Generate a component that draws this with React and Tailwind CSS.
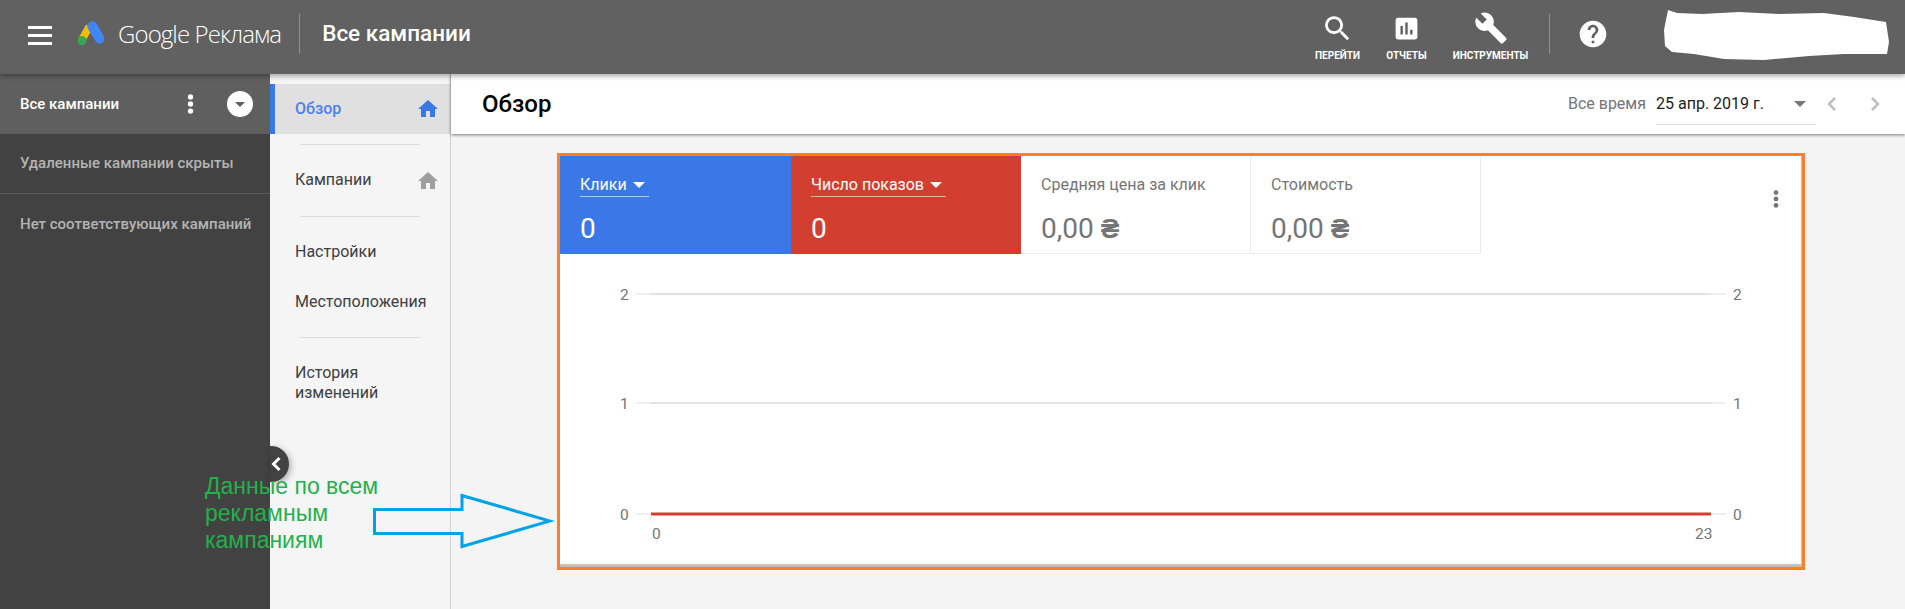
import React from 'react'

const paths = {
  home: 'M10 20v-6h4v6h5v-8h3L12 3 2 12h3v8z',
  search: 'M15.5 14h-.79l-.28-.27C15.41 12.59 16 11.11 16 9.5 16 5.91 13.09 3 9.5 3S3 5.91 3 9.5 5.91 16 9.5 16c1.61 0 3.09-.59 4.23-1.57l.27.28v.79l5 4.99L20.49 19l-4.99-5zm-6 0C7.01 14 5 11.99 5 9.5S7.01 5 9.5 5 14 7.01 14 9.5 11.99 14 9.5 14z',
  report: 'M19 3H5c-1.1 0-2 .9-2 2v14c0 1.1.9 2 2 2h14c1.1 0 2-.9 2-2V5c0-1.1-.9-2-2-2zM9 17H7v-7h2v7zm4 0h-2V7h2v10zm4 0h-2v-4h2v4z',
  wrench: 'M22.7 19l-9.1-9.1c.9-2.3.4-5-1.5-6.9-2-2-5-2.4-7.4-1.3L9 6 6 9 1.6 4.7C.4 7.1.9 10.1 2.9 12.1c1.9 1.9 4.6 2.4 6.9 1.5l9.1 9.1c.4.4 1 .4 1.4 0l2.3-2.3c.5-.4.5-1.1.1-1.4z',
  help: 'M12 2C6.48 2 2 6.48 2 12s4.48 10 10 10 10-4.48 10-10S17.52 2 12 2zm1 17h-2v-2h2v2zm2.07-7.75l-.9.92C13.45 12.9 13 13.5 13 15h-2v-.5c0-1.1.45-2.1 1.17-2.83l1.24-1.26c.37-.36.59-.86.59-1.41 0-1.1-.9-2-2-2s-2 .9-2 2H8c0-2.21 1.79-4 4-4s4 1.79 4 4c0 .88-.36 1.68-.93 2.25z',
}

function Icon({ name, className }) {
  return (
    <svg viewBox="0 0 24 24" fill="currentColor" className={className}>
      <path d={paths[name]} />
    </svg>
  )
}

function Dots({ className }) {
  return (
    <svg viewBox="0 0 6 18" fill="currentColor" className={className}>
      <circle cx="3" cy="2.6" r="2.4" />
      <circle cx="3" cy="9" r="2.4" />
      <circle cx="3" cy="15.4" r="2.4" />
    </svg>
  )
}

function Caret({ className }) {
  return (
    <svg viewBox="0 0 12 6" fill="currentColor" className={className}>
      <path d="M0 0h12L6 6z" />
    </svg>
  )
}

function Logo() {
  return (
    <svg viewBox="0 0 28 26" className="w-[28px] h-[26px]">
      <path d="M9.2 4.5 1.4 18.2l6.6 3.6 7.4-13z" fill="#fbbc04" />
      <path d="M13.8 1.5c2.6-1 4.7.2 5.7 1.8l7.2 13c1.3 2.6.5 5.2-1.6 6.6-2.3 1.300-5 .6-6.300-1.500L11 9c-1.500-3 0-6.400 2.800-7.500z" fill="#4285f4" />
      <circle cx="5" cy="20.500" r="4.500" fill="#34a853" />
    </svg>
  )
}

function HeaderAction({ icon, label, width, iconClass }) {
  return (
    <div className={`flex flex-col items-center text-white ${width}`}>
      <div className="h-[38px] flex items-center justify-center">
        <Icon name={icon} className={iconClass} />
      </div>
      <span className="mt-[2px] text-[10px] leading-[14px] font-bold whitespace-nowrap">{label}</span>
    </div>
  )
}

function Header() {
  return (
    <header className="relative z-20 h-[74px] shrink-0 flex items-start bg-[#616161] shadow-[0_2px_5px_rgba(0,0,0,0.35)]">
      <div className="w-[28px] ml-[28px] mt-[26px] flex flex-col gap-[5px]">
        <div className="h-[3px] w-[24px] bg-white"></div>
        <div className="h-[3px] w-[24px] bg-white"></div>
        <div className="h-[3px] w-[24px] bg-white"></div>
      </div>
      <div className="ml-[21px] mt-[20px]">
        <Logo />
      </div>
      <div className="ml-[13px] mt-[18px] text-[24px] leading-[32px] text-white font-['Open_Sans',sans-serif] tracking-[-0.9px] font-light whitespace-nowrap">Google Реклама</div>
      <div className="ml-[18px] mt-[14px] h-[40px] w-px bg-[#8e8e8e]"></div>
      <div className="ml-[22px] mt-[19px] text-[22.500px] leading-[28px] font-medium text-white whitespace-nowrap">Все кампании</div>

      <div className="ml-auto mr-[16px] flex items-start">
        <div className="flex items-start mt-[9px]">
          <HeaderAction icon="search" label="ПЕРЕЙТИ" width="w-[69px]" iconClass="w-[33px] h-[33px]" />
          <HeaderAction icon="report" label="ОТЧЕТЫ" width="w-[69px]" iconClass="w-[29px] h-[29px]" />
          <HeaderAction icon="wrench" label="ИНСТРУМЕНТЫ" width="w-[99px]" iconClass="w-[34px] h-[34px]" />
        </div>
        <div className="ml-[9px] mt-[14px] h-[40px] w-px bg-[#8e8e8e]"></div>
        <Icon name="help" className="ml-[27px] mt-[18px] w-[32px] h-[32px] text-white" />
        <svg viewBox="0 0 225 50" className="ml-[55px] mt-[10px] w-[225px] h-[50px]" fill="#fff">
          <path d="M4 0 13 3 38 4 75 2 115 4 160 3 190 7 222 12 225 32 223 44 180 44 145 46 100 50 60 49 30 44 8 42 1 36 0 20z" />
        </svg>
      </div>
    </header>
  )
}

function Sidebar() {
  return (
    <aside className="w-[270px] shrink-0 bg-[#424242] text-[15px] font-medium">
      <div className="h-[60px] bg-[#5f5f5f] flex items-center pl-[20px] text-white">
        <span className="leading-[20px]">Все кампании</span>
        <Dots className="ml-[68px] w-[7px] h-[20px]" />
        <div className="ml-[33px] w-[26px] h-[26px] rounded-full bg-white flex items-center justify-center">
          <Caret className="w-[10px] h-[5px] text-[#5f5f5f]" />
        </div>
      </div>
      <div className="h-[60px] flex items-center pl-[20px] text-[#b4b4b4] border-b border-[#5a5a5a]">Удаленные кампании скрыты</div>
      <div className="h-[60px] flex items-center pl-[20px] text-[#b4b4b4]">Нет соответствующих кампаний</div>
    </aside>
  )
}

function Divider({ className }) {
  return <div className={`ml-[30px] w-[120px] h-px bg-[#dcdcdc] ${className}`}></div>
}

function Nav() {
  return (
    <nav className="w-[181px] shrink-0 bg-[#f5f5f5] border-r border-[#d2d2d2] pt-[10px] text-[16px] text-[#3c4043]">
      <div className="h-[50px] bg-[#e0e0e0] border-l-[5px] border-[#3b78e7] flex items-center pl-[20px] pr-[10px] justify-between text-[#4d80ee] font-medium">
        <span>Обзор</span>
        <Icon name="home" className="w-[24px] h-[24px] text-[#3b78e7]" />
      </div>
      <Divider className="mt-[10px]" />
      <div className="h-[71px] flex items-center pl-[25px] pr-[10px] justify-between">
        <span className="-mt-[2px]">Кампании</span>
        <Icon name="home" className="w-[24px] h-[24px] text-[#9e9e9e]" />
      </div>
      <Divider />
      <div className="h-[70px] flex items-center pl-[25px]">Настройки</div>
      <div className="-mt-[20px] h-[70px] flex items-center pl-[25px]">Местоположения</div>
      <Divider />
      <div className="mt-[25px] pl-[25px] leading-[20px]">История<br />изменений</div>
    </nav>
  )
}

function Metric({ title, value, unit, bg, width, active }) {
  return (
    <div className={`${width} h-[98px] shrink-0 pl-[20px] pt-[17px] ${bg} ${active ? 'text-white' : 'text-[#757575] border-r border-b border-[#ececec]'}`}>
      <div className={`inline-flex items-center h-[23px] text-[16px] leading-[20px] ${active ? 'border-b border-white/60 pr-[4px]' : ''}`}>
        {title}
        {active && <Caret className="ml-[6px] w-[12px] h-[6px] text-white" />}
      </div>
      <div className="mt-[14px] text-[28px] leading-[36px] whitespace-nowrap">
        {value}
        {unit && <span className="font-bold"> {unit}</span>}
      </div>
    </div>
  )
}

// coordinates are relative to the card interior
function Chart() {
  const text = { fontFamily: 'Roboto, sans-serif', fontSize: 15.5, fill: '#757575' }
  const lines = [
    { y: 40, label: '2' },
    { y: 149, label: '1' },
    { y: 260, label: '0' },
  ]
  return (
    <svg width="1242" height="313" viewBox="0 0 1242 313" className="block">
      {lines.map((l) => (
        <g key={l.y}>
          <line x1="76" x2="1166" y1={l.y} y2={l.y} stroke="#efefef" strokeWidth="2" />
          {l.label !== '0' && <line x1="90" x2="1151" y1={l.y} y2={l.y} stroke="#e3e3e3" strokeWidth="2" />}
          <text x="60" y={l.y + 6} style={text}>{l.label}</text>
          <text x="1173" y={l.y + 6} style={text}>{l.label}</text>
        </g>
      ))}
      <line x1="91" x2="1151" y1="260" y2="260" stroke="#d23f31" strokeWidth="3" />
      <line x1="91" x2="91" y1="261" y2="268" stroke="#ececec" />
      <line x1="1151" x2="1151" y1="261" y2="268" stroke="#ececec" />
      <text x="92" y="285" style={text}>0</text>
      <text x="1135" y="285" style={text}>23</text>
    </svg>
  )
}

function Main() {
  return (
    <main className="flex-1 min-w-0 flex flex-col bg-[#f4f4f4]">
      <div className="relative z-10 h-[60px] shrink-0 bg-white shadow-[0_1px_3px_rgba(0,0,0,0.5)] flex items-center pl-[31px] pr-[18px]">
        <h1 className="text-[24px] font-medium text-black">Обзор</h1>
        <div className="ml-auto flex items-center text-[16px]">
          <span className="text-[#757575]">Все время</span>
          <div className="ml-[10px] w-[160px] h-[38px] mt-[3px] border-b border-[#d9d9d9] flex items-center justify-between pr-[10px] text-[#212121]">
            <span className="-mt-[3px]">25 апр. 2019 г.</span>
            <Caret className="w-[12px] h-[6px] text-[#757575] -mt-[3px]" />
          </div>
          <svg viewBox="0 0 24 24" className="ml-[4px] w-[24px] h-[24px]" fill="none" stroke="#bdbdbd" strokeWidth="2.500">
            <path d="M15 6l-6 6 6 6" />
          </svg>
          <svg viewBox="0 0 24 24" className="ml-[19px] w-[24px] h-[24px]" fill="none" stroke="#bdbdbd" strokeWidth="2.500">
            <path d="M9 6l6 6-6 6" />
          </svg>
        </div>
      </div>

      <div className="mt-[19px] ml-[106px] w-[1248px] h-[417px] border-[3px] border-[#ff7f27] bg-white relative">
        <div className="h-[411px] shadow-[inset_-1px_-3px_1px_rgba(0,0,0,0.25)]">
          <div className="flex">
            <Metric title="Клики" value="0" bg="bg-[#3b78e7]" width="w-[231px]" active />
            <Metric title="Число показов" value="0" bg="bg-[#d23f31]" width="w-[230px]" active />
            <Metric title="Средняя цена за клик" value="0,00" unit="₴" bg="bg-white" width="w-[230px]" />
            <Metric title="Стоимость" value="0,00" unit="₴" bg="bg-white" width="w-[230px]" />
            <Dots className="ml-[292px] mt-[34px] w-[6px] h-[18px] text-[#757575]" />
          </div>
          <Chart />
        </div>
      </div>
    </main>
  )
}

export default function App() {
  return (
    <div className="relative w-[1905px] h-[609px] overflow-hidden flex flex-col bg-[#f4f4f4] font-['Roboto',sans-serif]">
      <Header />
      <div className="flex flex-1 min-h-0">
        <Sidebar />
        <Nav />
        <Main />
      </div>

      {/* collapse tab */}
      <div className="absolute left-[270px] top-[446px] w-[19px] h-[36px] rounded-r-full bg-[#424242] shadow-[2px_2px_6px_rgba(0,0,0,0.3)] flex items-center">
        <svg viewBox="0 0 12 16" className="w-[12px] h-[16px]" fill="none" stroke="#fff" strokeWidth="3">
          <path d="M9.500 2 3.500 8l6 6" />
        </svg>
      </div>

      {/* annotation painted over the screenshot */}
      <div className="absolute left-[205px] top-[473px] text-[23px] leading-[27px] text-[#22b14c] font-['Liberation_Sans',sans-serif]">
        Данные по всем<br />рекламным<br />кампаниям
      </div>
      <svg className="absolute left-[370px] top-[490px] w-[185px] h-[62px]" viewBox="0 0 185 62" fill="none" stroke="#00a2e8" strokeWidth="3">
        <path d="M4.500 19.500H92V5.500L180 31 92 56.500V43.500H4.500z" />
      </svg>
    </div>
  )
}
